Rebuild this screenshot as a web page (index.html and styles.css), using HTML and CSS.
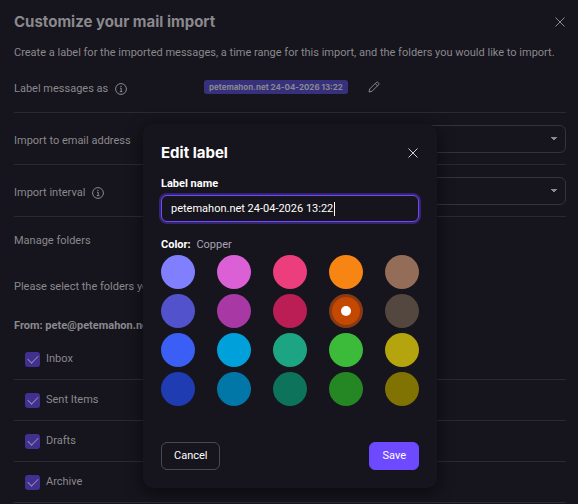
FILE: index.html
```
<!DOCTYPE html>
<html lang="en">
<head>
    <meta charset="UTF-8">
    <meta name="viewport" content="width=device-width, initial-scale=1.0">
    <title>Customize your mail import</title>
    <link rel="stylesheet" href="styles.css">
</head>
<body>
    <main class="import">
        <header class="header">
            <h1>Customize your mail import</h1>
            <button type="button" class="close" aria-label="Close">
                <svg width="12" height="12" viewBox="0 0 12 12"><path d="M1.5 1.5l9 9M10.5 1.5l-9 9"/></svg>
            </button>
        </header>
        <p class="intro">Create a label for the imported messages, a time range for this import, and the folders you would like to import.</p>

        <div class="row">
            <span class="row-name">Label messages as
                <svg class="info" width="12" height="12" viewBox="0 0 12 12"><circle cx="6" cy="6" r="5.4"/><path d="M5 5.2h1.2v3.3M4.8 8.6h2.6"/><circle class="dot" cx="6" cy="3.4" r=".7"/></svg>
            </span>
            <span class="badge">petemahon.net 24-04-2026 13:22</span>
            <button type="button" class="edit" aria-label="Edit label">
                <svg width="12" height="12" viewBox="0 0 12 12"><path d="M1 11l.7-3L8.2 1.5a1.3 1.3 0 0 1 1.9 0l.4.4a1.3 1.3 0 0 1 0 1.9L4 10.3zM7.2 2.5l2.3 2.3"/></svg>
            </button>
        </div>
        <div class="row">
            <label class="row-name" for="address">Import to email address</label>
            <select id="address"><option></option></select>
        </div>
        <div class="row">
            <label class="row-name" for="interval">Import interval
                <svg class="info" width="12" height="12" viewBox="0 0 12 12"><circle cx="6" cy="6" r="5.4"/><path d="M5 5.2h1.2v3.3M4.8 8.6h2.6"/><circle class="dot" cx="6" cy="3.4" r=".7"/></svg>
            </label>
            <select id="interval"><option></option></select>
        </div>

        <p class="manage">Manage folders</p>
        <p class="hint">Please select the folders you</p>
        <p class="from">From: pete@petemahon.net</p>
        <ul class="folders">
            <li><label><input type="checkbox" checked>Inbox</label></li>
            <li><label><input type="checkbox" checked>Sent Items</label></li>
            <li><label><input type="checkbox" checked>Drafts</label></li>
            <li><label><input type="checkbox" checked>Archive</label></li>
        </ul>
    </main>

    <div class="overlay">
        <form class="modal" role="dialog" aria-labelledby="modalTitle">
            <div class="header">
                <h2 id="modalTitle">Edit label</h2>
                <button type="button" class="close" aria-label="Close">
                    <svg width="12" height="12" viewBox="0 0 12 12"><path d="M1.5 1.5l9 9M10.5 1.5l-9 9"/></svg>
                </button>
            </div>
            <label class="field-label" for="labelName">Label name</label>
            <div class="field">
                <input type="text" id="labelName" value="petemahon.net 24-04-2026 13:22">
                <span class="caret"></span>
            </div>
            <fieldset class="colors">
                <legend>Color: <span>Copper</span></legend>
                <div class="swatches">
                    <input type="radio" name="color" class="purple" aria-label="Purple">
                    <input type="radio" name="color" class="pink" aria-label="Pink">
                    <input type="radio" name="color" class="strawberry" aria-label="Strawberry">
                    <input type="radio" name="color" class="carrot" aria-label="Carrot">
                    <input type="radio" name="color" class="sahara" aria-label="Sahara">
                    <input type="radio" name="color" class="enzian" aria-label="Enzian">
                    <input type="radio" name="color" class="plum" aria-label="Plum">
                    <input type="radio" name="color" class="cerise" aria-label="Cerise">
                    <input type="radio" name="color" class="copper" aria-label="Copper" checked>
                    <input type="radio" name="color" class="soil" aria-label="Soil">
                    <input type="radio" name="color" class="slateblue" aria-label="Slateblue">
                    <input type="radio" name="color" class="pacific" aria-label="Pacific">
                    <input type="radio" name="color" class="reef" aria-label="Reef">
                    <input type="radio" name="color" class="fern" aria-label="Fern">
                    <input type="radio" name="color" class="olive" aria-label="Olive">
                    <input type="radio" name="color" class="cobalt" aria-label="Cobalt">
                    <input type="radio" name="color" class="ocean" aria-label="Ocean">
                    <input type="radio" name="color" class="pine" aria-label="Pine">
                    <input type="radio" name="color" class="forest" aria-label="Forest">
                    <input type="radio" name="color" class="pickle" aria-label="Pickle">
                </div>
            </fieldset>
            <div class="actions">
                <button type="button" class="btn">Cancel</button>
                <button type="submit" class="btn btn-save">Save</button>
            </div>
        </form>
    </div>
</body>
</html>
```
FILE: styles.css
```
* {
    box-sizing: border-box;
}
body {
    margin: 0;
    height: 100vh;
    overflow: hidden;
    background: #16141c;
    color: #8a898d;
    font: 11px/16px Roboto, sans-serif;
}
h1, h2, p, ul, fieldset {
    margin: 0;
    padding: 0;
}
button {
    font: inherit;
    color: inherit;
    cursor: pointer;
}
svg {
    display: block;
    fill: none;
    stroke: currentColor;
}
.import {
    padding: 10px 12px 0 14px;
}
.header {
    display: flex;
    align-items: center;
    justify-content: space-between;
}
h1, h2 {
    font-family: Inter, sans-serif;
    font-size: 15px;
    line-height: 24px;
    font-weight: 700;
}
.close, .edit {
    padding: 0;
    border: 0;
    background: none;
}
.intro {
    margin-top: 11px;
}
.row {
    display: flex;
    align-items: center;
    height: 52px;
    border-bottom: 1px solid #2b2a31;
}
.row-name {
    display: flex;
    align-items: center;
    gap: 7px;
    width: 190px;
    padding-top: 5px;
}
.info .dot {
    fill: currentColor;
    stroke: none;
}
.badge {
    padding: 0 5px;
    border-radius: 3px;
    background: #37307c;
    font-family: Inter, sans-serif;
    font-size: 8px;
    line-height: 14px;
    font-weight: 700;
}
.edit {
    margin-left: 20px;
}
select {
    appearance: none;
    flex: 1;
    height: 28px;
    border: 1px solid #34333b;
    border-radius: 6px;
    background: linear-gradient(to bottom right, #8a898d 50%, transparent 50%) right 8px center / 3px 4px no-repeat,
        linear-gradient(to bottom left, #8a898d 50%, transparent 50%) right 11px center / 3px 4px no-repeat;
}
.manage {
    margin-top: 16px;
}
.hint {
    margin-top: 30px;
}
.from {
    margin-top: 23px;
    font-weight: 700;
}
.folders {
    margin-top: 5px;
    list-style: none;
}
.folders li {
    padding: 12px 11px;
    border-bottom: 1px solid #2b2a31;
}
.folders label {
    display: flex;
    align-items: center;
    gap: 6px;
}
.folders input {
    appearance: none;
    display: grid;
    place-items: center;
    width: 15px;
    height: 15px;
    margin: 0;
    border-radius: 3px;
    background: #41308f;
}
.folders input:checked::before {
    content: "";
    width: 9px;
    height: 5px;
    margin-bottom: 2px;
    border: solid #8f89ac;
    border-width: 0 0 1px 1px;
    transform: rotate(-45deg);
}

.overlay {
    position: absolute;
    inset: 0;
    display: flex;
    align-items: flex-end;
    justify-content: center;
    padding: 0 0 16px 2px;
}
.modal {
    width: 294px;
    padding: 17px 18px 18px;
    border-radius: 10px;
    background: #16141c;
    box-shadow: 0 4px 16px rgba(0, 0, 0, 0.5);
    color: #fff;
}
.modal .close {
    color: #d0d0d2;
}
.field-label {
    display: block;
    margin-top: 11px;
    font-weight: 700;
}
.field {
    position: relative;
    margin-top: 3px;
}
.field input {
    width: 100%;
    height: 27px;
    padding: 0 9px;
    border: 1px solid #6d4aff;
    border-radius: 6px;
    outline: none;
    background: #16141c;
    box-shadow: 0 0 0 2px #35256f;
    color: #fff;
    caret-color: transparent;
    font: inherit;
}
.caret {
    position: absolute;
    top: 7px;
    left: 173px;
    width: 1px;
    height: 14px;
    background: #fff;
}
.colors {
    margin-top: 15px;
    border: 0;
}
legend {
    padding: 0;
    font-weight: 700;
}
legend span {
    margin-left: 3px;
    color: #a7a4b5;
    font-weight: 400;
}
.swatches {
    display: grid;
    grid-template-columns: repeat(5, 34px);
    justify-content: space-between;
    row-gap: 5px;
    padding-top: 2px;
}
.swatches input {
    appearance: none;
    display: grid;
    place-items: center;
    width: 34px;
    height: 34px;
    margin: 0;
    border-radius: 50%;
}
.swatches input:checked {
    border: 3px solid #873a14;
}
.swatches input:checked::before {
    content: "";
    width: 10px;
    height: 10px;
    border-radius: 50%;
    background: #fff;
}
.purple { background: #8080ff; }
.pink { background: #db60d6; }
.strawberry { background: #ec3e7c; }
.carrot { background: #f78514; }
.sahara { background: #936d58; }
.enzian { background: #5252cc; }
.plum { background: #a839a4; }
.cerise { background: #ba1e55; }
.copper { background: #c44800; }
.soil { background: #54473f; }
.slateblue { background: #3b5ff5; }
.pacific { background: #00a0da; }
.reef { background: #1da583; }
.fern { background: #3cbb3a; }
.olive { background: #b4a40e; }
.cobalt { background: #203cb3; }
.ocean { background: #0077a6; }
.pine { background: #0d735a; }
.forest { background: #258723; }
.pickle { background: #807304; }
.actions {
    display: flex;
    justify-content: space-between;
    margin-top: 36px;
}
.btn {
    height: 28px;
    padding: 0 12px;
    border: 1px solid #4a4851;
    border-radius: 6px;
    background: transparent;
    color: #fff;
}
.btn-save {
    border-color: #6d4aff;
    background: #6d4aff;
}
```
